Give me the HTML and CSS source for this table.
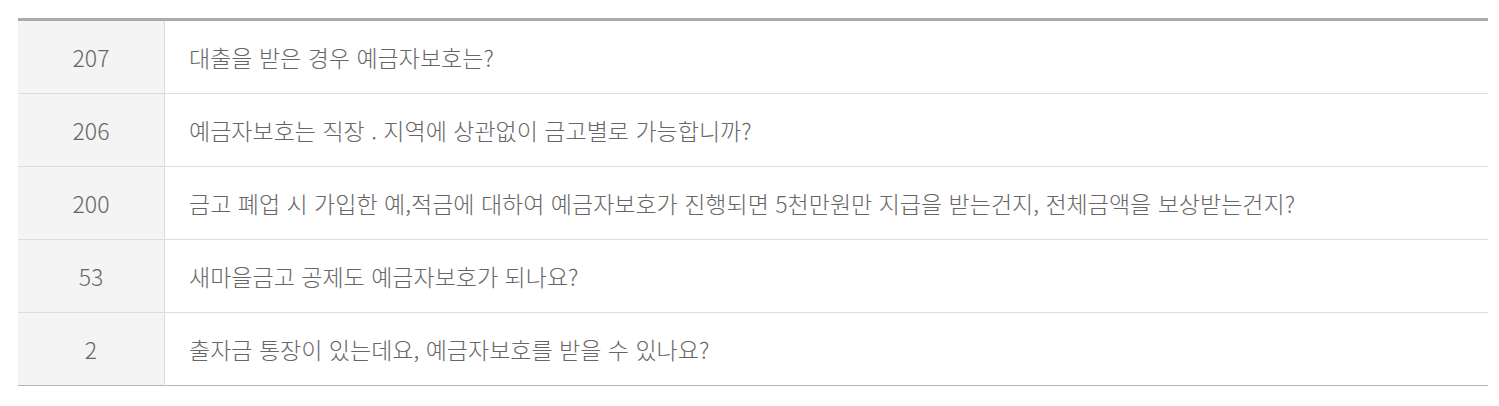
FILE: index.html
```html
<!DOCTYPE html>
<html lang="ko">
<head>
<meta charset="utf-8">
<link rel="stylesheet" href="styles.css">
</head>
<body>
<table class="faq">
  <tbody>
    <tr><td class="num">207</td><td class="title">대출을 받은 경우 예금자보호는?</td></tr>
    <tr><td class="num">206</td><td class="title">예금자보호는 직장 . 지역에 상관없이 금고별로 가능합니까?</td></tr>
    <tr><td class="num">200</td><td class="title">금고 폐업 시 가입한 예,적금에 대하여 예금자보호가 진행되면 5천만원만 지급을 받는건지, 전체금액을 보상받는건지?</td></tr>
    <tr><td class="num">53</td><td class="title">새마을금고 공제도 예금자보호가 되나요?</td></tr>
    <tr><td class="num">2</td><td class="title">출자금 통장이 있는데요, 예금자보호를 받을 수 있나요?</td></tr>
  </tbody>
</table>
</body>
</html>
```
FILE: styles.css
```css
html, body { margin: 0; padding: 0; background: #fff; }
body { padding: 18px 11px 0 18px; }
.faq {
  width: 1470px;
  border-collapse: collapse;
  border-top: 3px solid #aaaaaa;
  border-bottom: 1px solid #b4b4b4;
  font-family: "Noto Sans CJK KR", "Noto Sans", sans-serif;
  font-size: 23px;
  font-weight: 300;
  color: #666;
}
.faq td {
  height: 72px;
  padding: 0;
  border-top: 1px solid #dddddd;
  vertical-align: middle;
  line-height: 30px;
}
.faq tr:first-child td { border-top: 0; }
.num {
  width: 146px;
  background: #f4f4f4;
  text-align: center;
  border-right: 1px solid #dddddd;
}
.title {
  padding-left: 24px !important;
  text-align: left;
}
```
